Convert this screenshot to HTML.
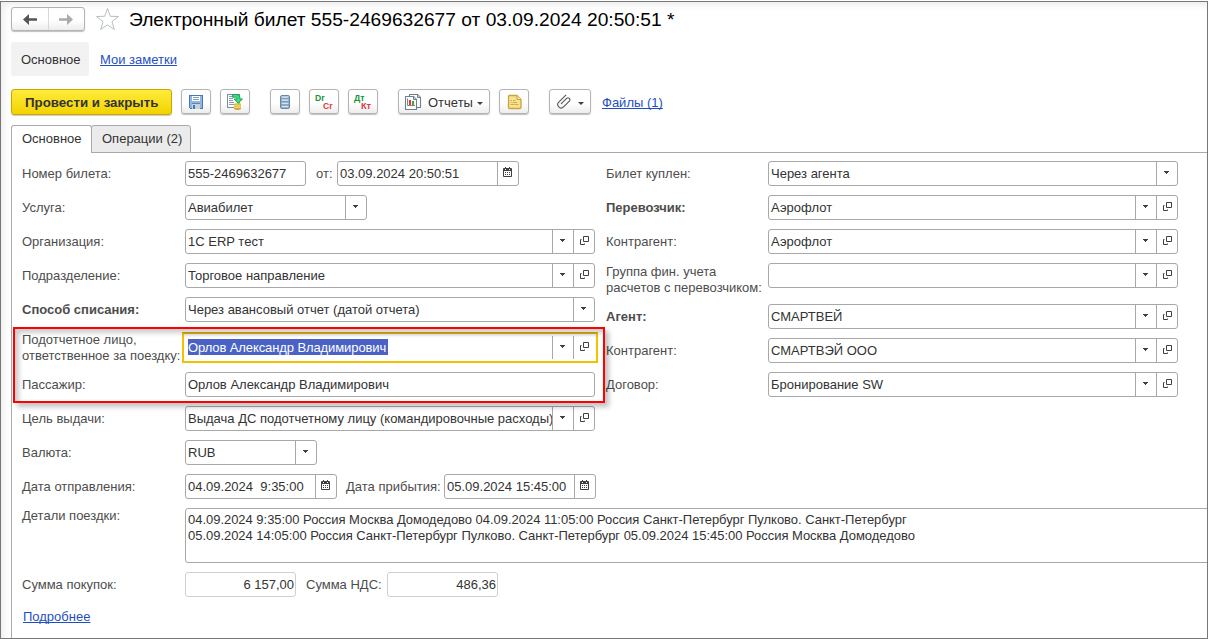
<!DOCTYPE html>
<html><head><meta charset="utf-8">
<style>
*{box-sizing:border-box;margin:0;padding:0}
html,body{width:1208px;height:639px;overflow:hidden;background:#fff}
body{position:relative;font-family:"Liberation Sans",sans-serif;font-size:13px;color:#333}
.a{position:absolute;white-space:nowrap}
#frame{position:absolute;z-index:10;left:0;top:1px;width:1208px;height:638px;border:1px solid #777;box-shadow:inset 6px 6px 7px -3px rgba(0,0,0,.075)}
#shl{position:absolute;left:1px;top:2px;width:10px;height:636px;background:linear-gradient(to right,#ececec,#fff)}
#sht{position:absolute;left:1px;top:2px;width:1206px;height:8px;background:linear-gradient(to bottom,#ececec,#fff)}
.lbl{position:absolute;white-space:nowrap;color:#4d4d4d;line-height:16px}
.b{font-weight:bold}
.fld{position:absolute;height:25px;border:1px solid #a8a8a8;border-radius:3px;background:#fff;color:#333;line-height:22px;padding-left:2px;padding-top:1px;white-space:nowrap;overflow:hidden}
.sep{position:absolute;top:0;height:22px;border-left:1px solid #a8a8a8}
.dd{position:absolute;top:9px;width:0;height:0;border-left:2.5px solid transparent;border-right:2.5px solid transparent;border-top:3px solid #404040}
.op{position:absolute;top:0;width:21px;height:22px}
.tbtn{position:absolute;top:89px;height:25px;border:1px solid #b4b4b4;border-radius:3px;background:linear-gradient(#fff 0%,#fff 55%,#ededed 100%);box-shadow:0 1px 1px rgba(0,0,0,.25)}
.link{color:#1f4fbf;text-decoration:underline;text-decoration-skip-ink:none}
.ic{position:absolute;display:block}
.ro{border-color:#cfcfcf}
</style></head>
<body>
<div id="frame"></div>

<!-- nav buttons -->
<div class="tbtn" style="left:11px;top:7px;width:74px;height:24px"></div>
<div class="a" style="left:48px;top:8px;height:22px;border-left:1px solid #d8d8d8"></div>
<svg class="a" style="left:22px;top:13px" width="16" height="13" viewBox="0 0 16 13"><path d="M1 6.5 L7 1 V5.2 H15 V7.8 H7 V12 Z" fill="#555"/></svg>
<svg class="a" style="left:58px;top:13px" width="16" height="13" viewBox="0 0 16 13"><path d="M15 6.5 L9 1 V5.2 H1 V7.8 H9 V12 Z" fill="#aaa"/></svg>
<!-- star -->
<svg class="a" style="left:95px;top:7px" width="25" height="24" viewBox="0 0 25 24"><path d="M12.5 1.5 L15.3 9.3 L23.5 9.5 L17 14.6 L19.3 22.5 L12.5 17.9 L5.7 22.5 L8 14.6 L1.5 9.5 L9.7 9.3 Z" fill="none" stroke="#b8bec4" stroke-width="1"/></svg>
<div class="a" style="left:129px;top:7px;font-size:19.2px;line-height:26px;color:#000">Электронный билет 555-2469632677 от 03.09.2024 20:50:51 *</div>

<!-- section tabs -->
<div class="a" style="left:11px;top:42px;width:78px;height:34px;background:#f2f2f2;border-radius:3px"></div>
<div class="a" style="left:21px;top:52px;line-height:16px;color:#333">Основное</div>
<div class="a link" style="left:100px;top:52px;line-height:16px">Мои заметки</div>

<!-- toolbar -->
<div class="a" style="left:11px;top:89px;width:161px;height:26px;border:1px solid #c8a800;border-radius:3px;background:linear-gradient(#ffeb3b,#f3d300);box-shadow:0 1px 1px rgba(0,0,0,.2)"></div>
<div class="a b" style="left:25px;top:95px;line-height:16px;font-size:13.3px;color:#333">Провести и закрыть</div>

<div class="tbtn" style="left:181px;width:30px"></div>
<div class="tbtn" style="left:220px;width:30px"></div>
<div class="tbtn" style="left:270px;width:30px"></div>
<div class="tbtn" style="left:309px;width:30px"></div>
<div class="tbtn" style="left:348px;width:30px"></div>
<div class="tbtn" style="left:398px;width:92px"></div>
<div class="tbtn" style="left:499px;width:30px"></div>
<div class="tbtn" style="left:549px;width:42px"></div>
<div class="a link" style="left:602px;top:95px;line-height:16px">Файлы (1)</div>
<div class="a" style="left:428px;top:95px;line-height:16px;color:#333">Отчеты</div>

<!-- floppy -->
<svg class="ic" style="left:189px;top:95px" width="14" height="14" viewBox="0 0 14 14" shape-rendering="crispEdges">
<rect x="0" y="0" width="14" height="14" fill="#4a78b5"/>
<rect x="1" y="1" width="12" height="12" fill="#8fb5e5"/>
<rect x="3" y="1" width="8" height="5" fill="#fff"/>
<rect x="4" y="2" width="6" height="1" fill="#7d9cc0"/>
<rect x="4" y="4" width="6" height="1" fill="#7d9cc0"/>
<rect x="3" y="8" width="8" height="1" fill="#5d86bd"/>
<rect x="3" y="9" width="8" height="5" fill="#c9d3d3"/>
<rect x="4" y="10" width="2" height="4" fill="#4a78b5"/>
<rect x="0" y="13" width="1" height="1" fill="#fff"/>
</svg>
<!-- post -->
<svg class="ic" style="left:226px;top:93px" width="18" height="18" viewBox="0 0 18 18">
<rect x="1.5" y="1.5" width="12" height="13" fill="#fff" stroke="#7b8ba2" stroke-width="1"/>
<g stroke="#8a9ab0" stroke-width="1"><path d="M3 3.5h3M3 5.5h4M3 7.5h4M3 9.5h5M3 11.5h5"/></g>
<ellipse cx="11.5" cy="11.3" rx="3.5" ry="1.5" fill="#ead060"/>
<rect x="8" y="11.3" width="7" height="4.2" fill="#dcb830"/>
<ellipse cx="11.5" cy="15.5" rx="3.5" ry="1.4" fill="#c9a226"/>
<path d="M8.2 12.8h6.6M8.2 14.6h6.6" stroke="#f6e68a" stroke-width="0.9"/>
<path d="M6.5 1.5 H10.5 Q14 1.5 14 5 V6 H16.5 L12.2 10.3 L8 6 H11 V5.5 Q11 4.2 9.7 4.2 H6.5 Z" fill="#34e08e" stroke="#1f9a48" stroke-width="0.9" stroke-linejoin="round"/>
</svg>
<!-- list -->
<svg class="ic" style="left:280px;top:95px" width="10" height="14" viewBox="0 0 10 14">
<rect x="0.5" y="0.5" width="9" height="13" rx="1.5" fill="#7b9bb8" stroke="#6787a5" stroke-width="1"/>
<g fill="#d3e4f1"><rect x="1.5" y="1.3" width="7" height="1.6"/><rect x="1.5" y="4.3" width="7" height="1.6"/><rect x="1.5" y="7.6" width="7" height="1.6"/><rect x="1.5" y="10.8" width="7" height="1.6"/></g>
</svg>
<!-- Dr Cr -->
<div class="a b" style="left:315px;top:93px;font-size:8.6px;line-height:10px;color:#14953c">Dr</div>
<div class="a b" style="left:323px;top:101px;font-size:8.6px;line-height:10px;color:#e03a3a">Cr</div>
<div class="a b" style="left:354px;top:93px;font-size:8.8px;line-height:10px;color:#14953c">Дт</div>
<div class="a b" style="left:361px;top:101px;font-size:9.2px;line-height:10px;color:#e03a3a">Кт</div>
<!-- reports -->
<svg class="ic" style="left:404px;top:93px" width="18" height="18" viewBox="0 0 18 18">
<path d="M5.5 1.5 H13.5 L16.5 4.5 V14.5 H5.5 Z" fill="#fff" stroke="#6d7f92" stroke-width="1.1" stroke-linejoin="round"/>
<path d="M13.5 1.5 V4.5 H16.5" fill="#c8d0d8" stroke="#6d7f92" stroke-width="1"/>
<rect x="10" y="6" width="2" height="5" fill="#39a83a"/>
<path d="M1.5 3.5 H9.5 L12.5 6.5 V16.5 H1.5 Z" fill="#fff" stroke="#6d7f92" stroke-width="1.1" stroke-linejoin="round"/>
<path d="M9.5 3.5 V6.5 H12.5" fill="#c8d0d8" stroke="#6d7f92" stroke-width="1"/>
<path d="M3.5 5.5 V12.5 H11" fill="none" stroke="#777" stroke-width="0.9"/>
<rect x="5" y="7" width="2" height="5" fill="#ee3322"/>
<rect x="8" y="8" width="2" height="4" fill="#39a83a"/>
</svg>
<div class="dd" style="left:477px;top:102px;border-left-width:3px;border-right-width:3px;border-top-width:3px"></div>
<!-- note -->
<svg class="ic" style="left:507px;top:94px" width="16" height="16" viewBox="0 0 16 16">
<path d="M2 1.5 H10 L14 5.5 V13.5 Q14 14.5 13 14.5 H2.5 Q1.5 14.5 1.5 13.5 V2.5 Q1.5 1.5 2.5 1.5 Z" fill="#f6e295" stroke="#c9a43a" stroke-width="1.3"/>
<path d="M10 1.5 V4.5 Q10 5.5 11 5.5 H14" fill="#f8e8a8" stroke="#c9a43a" stroke-width="1.1"/>
<g stroke="#d2ad45" stroke-width="1"><path d="M3.5 6.5h1.5M6 6.5h2.5M3.5 8.5h1M5.5 8.5h4.5M3.5 10.5h3.5M7.5 10.5h4"/></g>
</svg>
<!-- clip -->
<svg class="ic" style="left:557px;top:94px" width="15" height="15" viewBox="0 0 15 15">
<path d="M8.8 1.2 L1.8 8.2 A3.3 3.3 0 0 0 6.5 12.9 L12.3 7.1 A1.9 1.9 0 0 0 9.6 4.4 L4.3 9.7" fill="none" stroke="#555" stroke-width="1.1" stroke-linecap="round"/>
</svg>
<div class="dd" style="left:578px;top:102px;border-left-width:3px;border-right-width:3px;border-top-width:3px"></div>

<!-- tabs -->
<div class="a" style="left:11px;top:152px;width:1197px;height:500px;border-left:1px solid #aaa;border-top:1px solid #aaa"></div>
<div class="a" style="left:91px;top:125px;width:100px;height:28px;background:#ebebeb;border:1px solid #aaa;border-radius:3px 3px 0 0"></div>
<div class="a" style="left:11px;top:125px;width:81px;height:28px;background:#fff;border:1px solid #aaa;border-bottom:none;border-radius:3px 3px 0 0"></div>
<div class="a" style="left:22px;top:131px;line-height:16px;color:#333">Основное</div>
<div class="a" style="left:102px;top:131px;line-height:16px;color:#333">Операции (2)</div>

<div id="form">
<div class="lbl" style="left:22px;top:162px;line-height:24px">Номер билета:</div>
<div class="fld " style="left:185px;top:161px;width:121px;height:25px;"><span style="">555-2469632677</span></div>
<div class="lbl" style="left:316px;top:162px;line-height:24px">от:</div>
<div class="fld " style="left:337px;top:161px;width:182px;height:25px;"><span style="">03.09.2024 20:50:51</span><div class="sep" style="left:159px;height:23px"></div><svg class="ic" style="left:165px;top:5px" width="10" height="11" viewBox="0 0 10 11"><rect x="0" y="1" width="9" height="9" rx="1" fill="#404040"/><rect x="1" y="4" width="7" height="5" fill="#fff"/><rect x="2" y="0" width="1" height="2" fill="#404040"/><rect x="6" y="0" width="1" height="2" fill="#404040"/><rect x="2" y="2" width="1" height="1" fill="#fff"/><rect x="6" y="2" width="1" height="1" fill="#fff"/><g fill="#404040"><rect x="2" y="5" width="1" height="1"/><rect x="4" y="5" width="1" height="1"/><rect x="6" y="5" width="1" height="1"/><rect x="2" y="7" width="1" height="1"/><rect x="4" y="7" width="1" height="1"/><rect x="6" y="7" width="1" height="1"/></g></svg></div>
<div class="lbl" style="left:22px;top:196px;line-height:24px">Услуга:</div>
<div class="fld " style="left:185px;top:195px;width:182px;height:25px;"><span style="">Авиабилет</span><div class="sep" style="left:159px;height:23px"></div><svg class="ic" style="left:167px;top:9px" width="5" height="3" shape-rendering="crispEdges"><path d="M0 0h5v1h-1v1h-1v1h-1v-1h-1v-1h-1z" fill="#404040"/></svg></div>
<div class="lbl" style="left:22px;top:230px;line-height:24px">Организация:</div>
<div class="fld " style="left:185px;top:229px;width:410px;height:25px;"><span style="">1С ERP тест</span><div class="sep" style="left:366px;height:23px"></div><svg class="ic" style="left:374px;top:9px" width="5" height="3" shape-rendering="crispEdges"><path d="M0 0h5v1h-1v1h-1v1h-1v-1h-1v-1h-1z" fill="#404040"/></svg><div class="sep" style="left:387px;height:23px"></div><svg class="ic" style="left:393px;top:6px" width="10" height="10" viewBox="0 0 10 10"><path d="M4.5 0.5h5v5h-5z M1.5 3.5v5h4v-1 M1.5 3.5h1" fill="none" stroke="#404040" stroke-width="1"/></svg></div>
<div class="lbl" style="left:22px;top:264px;line-height:24px">Подразделение:</div>
<div class="fld " style="left:185px;top:263px;width:410px;height:25px;"><span style="">Торговое направление</span><div class="sep" style="left:366px;height:23px"></div><svg class="ic" style="left:374px;top:9px" width="5" height="3" shape-rendering="crispEdges"><path d="M0 0h5v1h-1v1h-1v1h-1v-1h-1v-1h-1z" fill="#404040"/></svg><div class="sep" style="left:387px;height:23px"></div><svg class="ic" style="left:393px;top:6px" width="10" height="10" viewBox="0 0 10 10"><path d="M4.5 0.5h5v5h-5z M1.5 3.5v5h4v-1 M1.5 3.5h1" fill="none" stroke="#404040" stroke-width="1"/></svg></div>
<div class="lbl b" style="left:22px;top:298px;line-height:24px">Способ списания:</div>
<div class="fld " style="left:185px;top:297px;width:410px;height:25px;"><span style="">Через авансовый отчет (датой отчета)</span><div class="sep" style="left:387px;height:23px"></div><svg class="ic" style="left:395px;top:9px" width="5" height="3" shape-rendering="crispEdges"><path d="M0 0h5v1h-1v1h-1v1h-1v-1h-1v-1h-1z" fill="#404040"/></svg></div>
<div class="lbl" style="left:22px;top:332px;line-height:16px">Подотчетное лицо,<br>ответственное за поездку:</div>
<div class="lbl" style="left:22px;top:373px;line-height:24px">Пассажир:</div>
<div class="fld " style="left:185px;top:372px;width:410px;height:25px;"><span style="">Орлов Александр Владимирович</span></div>
<div class="lbl" style="left:22px;top:407px;line-height:24px">Цель выдачи:</div>
<div class="fld " style="left:185px;top:406px;width:410px;height:25px;"><span style="">Выдача ДС подотчетному лицу (командировочные расходы)</span><div class="sep" style="left:366px;height:23px"></div><svg class="ic" style="left:374px;top:9px" width="5" height="3" shape-rendering="crispEdges"><path d="M0 0h5v1h-1v1h-1v1h-1v-1h-1v-1h-1z" fill="#404040"/></svg><div class="sep" style="left:387px;height:23px"></div><svg class="ic" style="left:393px;top:6px" width="10" height="10" viewBox="0 0 10 10"><path d="M4.5 0.5h5v5h-5z M1.5 3.5v5h4v-1 M1.5 3.5h1" fill="none" stroke="#404040" stroke-width="1"/></svg></div>
<div class="lbl" style="left:22px;top:441px;line-height:24px">Валюта:</div>
<div class="fld " style="left:185px;top:440px;width:132px;height:25px;"><span style="">RUB</span><div class="sep" style="left:109px;height:23px"></div><svg class="ic" style="left:117px;top:9px" width="5" height="3" shape-rendering="crispEdges"><path d="M0 0h5v1h-1v1h-1v1h-1v-1h-1v-1h-1z" fill="#404040"/></svg></div>
<div class="lbl" style="left:22px;top:475px;line-height:24px">Дата отправления:</div>
<div class="fld " style="left:185px;top:474px;width:152px;height:25px;"><span style="">04.09.2024 &nbsp;9:35:00</span><div class="sep" style="left:129px;height:23px"></div><svg class="ic" style="left:135px;top:5px" width="10" height="11" viewBox="0 0 10 11"><rect x="0" y="1" width="9" height="9" rx="1" fill="#404040"/><rect x="1" y="4" width="7" height="5" fill="#fff"/><rect x="2" y="0" width="1" height="2" fill="#404040"/><rect x="6" y="0" width="1" height="2" fill="#404040"/><rect x="2" y="2" width="1" height="1" fill="#fff"/><rect x="6" y="2" width="1" height="1" fill="#fff"/><g fill="#404040"><rect x="2" y="5" width="1" height="1"/><rect x="4" y="5" width="1" height="1"/><rect x="6" y="5" width="1" height="1"/><rect x="2" y="7" width="1" height="1"/><rect x="4" y="7" width="1" height="1"/><rect x="6" y="7" width="1" height="1"/></g></svg></div>
<div class="lbl" style="left:346px;top:475px;line-height:24px">Дата прибытия:</div>
<div class="fld " style="left:444px;top:474px;width:152px;height:25px;"><span style="">05.09.2024 15:45:00</span><div class="sep" style="left:129px;height:23px"></div><svg class="ic" style="left:135px;top:5px" width="10" height="11" viewBox="0 0 10 11"><rect x="0" y="1" width="9" height="9" rx="1" fill="#404040"/><rect x="1" y="4" width="7" height="5" fill="#fff"/><rect x="2" y="0" width="1" height="2" fill="#404040"/><rect x="6" y="0" width="1" height="2" fill="#404040"/><rect x="2" y="2" width="1" height="1" fill="#fff"/><rect x="6" y="2" width="1" height="1" fill="#fff"/><g fill="#404040"><rect x="2" y="5" width="1" height="1"/><rect x="4" y="5" width="1" height="1"/><rect x="6" y="5" width="1" height="1"/><rect x="2" y="7" width="1" height="1"/><rect x="4" y="7" width="1" height="1"/><rect x="6" y="7" width="1" height="1"/></g></svg></div>
<div class="lbl" style="left:22px;top:507px;line-height:18px">Детали поездки:</div>
<div class="fld" style="left:185px;top:508px;width:1030px;height:55px;line-height:16px;padding-top:3px;letter-spacing:-0.03px">04.09.2024 9:35:00 Россия Москва Домодедово 04.09.2024 11:05:00 Россия Санкт-Петербург Пулково. Санкт-Петербург<br>05.09.2024 14:05:00 Россия Санкт-Петербург Пулково. Санкт-Петербург 05.09.2024 15:45:00 Россия Москва Домодедово</div>
<div class="lbl" style="left:22px;top:573px;line-height:24px">Сумма покупок:</div>
<div class="fld ro" style="left:185px;top:572px;width:111px;height:25px;"><span style="position:absolute;right:1px;top:1px;">6 157,00</span></div>
<div class="lbl" style="left:306px;top:573px;line-height:24px">Сумма НДС:</div>
<div class="fld ro" style="left:387px;top:572px;width:111px;height:25px;"><span style="position:absolute;right:1px;top:1px;">486,36</span></div>
<div class="a link" style="left:23px;top:609px;line-height:16px">Подробнее</div>
<div class="lbl" style="left:606px;top:162px;line-height:24px">Билет куплен:</div>
<div class="fld " style="left:768px;top:161px;width:410px;height:25px;"><span style="">Через агента</span><div class="sep" style="left:387px;height:23px"></div><svg class="ic" style="left:395px;top:9px" width="5" height="3" shape-rendering="crispEdges"><path d="M0 0h5v1h-1v1h-1v1h-1v-1h-1v-1h-1z" fill="#404040"/></svg></div>
<div class="lbl b" style="left:606px;top:196px;line-height:24px">Перевозчик:</div>
<div class="fld " style="left:768px;top:195px;width:410px;height:25px;"><span style="">Аэрофлот</span><div class="sep" style="left:366px;height:23px"></div><svg class="ic" style="left:374px;top:9px" width="5" height="3" shape-rendering="crispEdges"><path d="M0 0h5v1h-1v1h-1v1h-1v-1h-1v-1h-1z" fill="#404040"/></svg><div class="sep" style="left:387px;height:23px"></div><svg class="ic" style="left:393px;top:6px" width="10" height="10" viewBox="0 0 10 10"><path d="M4.5 0.5h5v5h-5z M1.5 3.5v5h4v-1 M1.5 3.5h1" fill="none" stroke="#404040" stroke-width="1"/></svg></div>
<div class="lbl" style="left:606px;top:230px;line-height:24px">Контрагент:</div>
<div class="fld " style="left:768px;top:229px;width:410px;height:25px;"><span style="">Аэрофлот</span><div class="sep" style="left:366px;height:23px"></div><svg class="ic" style="left:374px;top:9px" width="5" height="3" shape-rendering="crispEdges"><path d="M0 0h5v1h-1v1h-1v1h-1v-1h-1v-1h-1z" fill="#404040"/></svg><div class="sep" style="left:387px;height:23px"></div><svg class="ic" style="left:393px;top:6px" width="10" height="10" viewBox="0 0 10 10"><path d="M4.5 0.5h5v5h-5z M1.5 3.5v5h4v-1 M1.5 3.5h1" fill="none" stroke="#404040" stroke-width="1"/></svg></div>
<div class="lbl" style="left:606px;top:264px;line-height:16px">Группа фин. учета<br>расчетов с перевозчиком:</div>
<div class="fld " style="left:768px;top:263px;width:410px;height:25px;"><div class="sep" style="left:366px;height:23px"></div><svg class="ic" style="left:374px;top:9px" width="5" height="3" shape-rendering="crispEdges"><path d="M0 0h5v1h-1v1h-1v1h-1v-1h-1v-1h-1z" fill="#404040"/></svg><div class="sep" style="left:387px;height:23px"></div><svg class="ic" style="left:393px;top:6px" width="10" height="10" viewBox="0 0 10 10"><path d="M4.5 0.5h5v5h-5z M1.5 3.5v5h4v-1 M1.5 3.5h1" fill="none" stroke="#404040" stroke-width="1"/></svg></div>
<div class="lbl b" style="left:606px;top:305px;line-height:24px">Агент:</div>
<div class="fld " style="left:768px;top:304px;width:410px;height:25px;"><span style="">СМАРТВЕЙ</span><div class="sep" style="left:366px;height:23px"></div><svg class="ic" style="left:374px;top:9px" width="5" height="3" shape-rendering="crispEdges"><path d="M0 0h5v1h-1v1h-1v1h-1v-1h-1v-1h-1z" fill="#404040"/></svg><div class="sep" style="left:387px;height:23px"></div><svg class="ic" style="left:393px;top:6px" width="10" height="10" viewBox="0 0 10 10"><path d="M4.5 0.5h5v5h-5z M1.5 3.5v5h4v-1 M1.5 3.5h1" fill="none" stroke="#404040" stroke-width="1"/></svg></div>
<div class="lbl" style="left:606px;top:339px;line-height:24px">Контрагент:</div>
<div class="fld " style="left:768px;top:338px;width:410px;height:25px;"><span style="">СМАРТВЭЙ ООО</span><div class="sep" style="left:366px;height:23px"></div><svg class="ic" style="left:374px;top:9px" width="5" height="3" shape-rendering="crispEdges"><path d="M0 0h5v1h-1v1h-1v1h-1v-1h-1v-1h-1z" fill="#404040"/></svg><div class="sep" style="left:387px;height:23px"></div><svg class="ic" style="left:393px;top:6px" width="10" height="10" viewBox="0 0 10 10"><path d="M4.5 0.5h5v5h-5z M1.5 3.5v5h4v-1 M1.5 3.5h1" fill="none" stroke="#404040" stroke-width="1"/></svg></div>
<div class="lbl" style="left:606px;top:373px;line-height:24px">Договор:</div>
<div class="fld " style="left:768px;top:372px;width:410px;height:25px;"><span style="">Бронирование SW</span><div class="sep" style="left:366px;height:23px"></div><svg class="ic" style="left:374px;top:9px" width="5" height="3" shape-rendering="crispEdges"><path d="M0 0h5v1h-1v1h-1v1h-1v-1h-1v-1h-1z" fill="#404040"/></svg><div class="sep" style="left:387px;height:23px"></div><svg class="ic" style="left:393px;top:6px" width="10" height="10" viewBox="0 0 10 10"><path d="M4.5 0.5h5v5h-5z M1.5 3.5v5h4v-1 M1.5 3.5h1" fill="none" stroke="#404040" stroke-width="1"/></svg></div>
<div class="a" style="left:182px;top:332px;width:416px;height:31px;border:2px solid #f2c200;border-top-color:#d6a914;background:#fff;box-shadow:inset 0 2px 2px rgba(0,0,0,.08)"><div style="position:absolute;left:4px;top:5px;height:16px;line-height:16px;background:#4a62c6;color:#fff;width:200px;overflow:hidden"><span style="position:relative;top:1px;letter-spacing:-0.1px">Орлов Александр Владимирович</span></div><div class="sep" style="left:368px;top:2px;height:23px"></div><svg class="ic" style="left:376px;top:11px" width="5" height="3" shape-rendering="crispEdges"><path d="M0 0h5v1h-1v1h-1v1h-1v-1h-1v-1h-1z" fill="#404040"/></svg><div class="sep" style="left:389px;top:2px;height:23px"></div><svg class="ic" style="left:395px;top:8px" width="10" height="10" viewBox="0 0 10 10"><path d="M4.5 0.5h5v5h-5z M1.5 3.5v5h4v-1 M1.5 3.5h1" fill="none" stroke="#404040" stroke-width="1"/></svg></div>
<div class="a" style="left:13px;top:327px;width:592px;height:76px;border:2px solid #f00;box-shadow:4px 4px 5px rgba(0,0,0,.24), inset 4px 4px 5px rgba(0,0,0,.2)"></div>
</div>
</body></html>
